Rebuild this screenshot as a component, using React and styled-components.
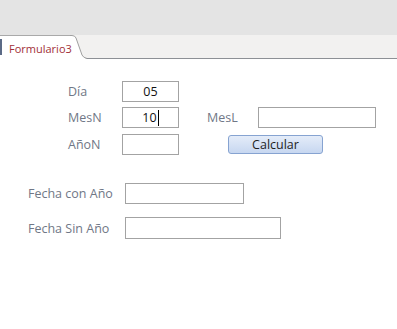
import React from "react";
import styled, { createGlobalStyle } from "styled-components";

const Global = createGlobalStyle`
  html, body { margin: 0; padding: 0; background: #ffffff; }
  body { width: 397px; height: 329px; overflow: hidden; font-family: "Open Sans", "Noto Sans", sans-serif; }
`;

const Page = styled.div`
  width: 397px;
  height: 329px;
  display: flex;
  flex-direction: column;
  background: #ffffff;
`;

const TopBar = styled.div`
  height: 35px;
  background: #e4e4e4;
  flex: none;
`;

const TabStrip = styled.div`
  height: 23px;
  background: #f2f1f0;
  border-bottom: 1px solid #8d9095;
  display: flex;
  align-items: stretch;
  flex: none;
`;

const Tab = styled.div`
  position: relative;
  width: 70px;
  height: 24px;
  background: #ffffff;
  border-top: 1px solid #a9a9a9;
  box-sizing: border-box;
  display: flex;
  align-items: center;
  padding-left: 9px;
  margin-bottom: -1px;
  white-space: nowrap;
`;

const TabEdge = styled.svg`
  position: absolute;
  left: 70px;
  top: -1px;
  width: 17px;
  height: 24px;
`;

const TabMarker = styled.span`
  position: absolute;
  left: 0;
  top: 3px;
  width: 2px;
  height: 16px;
  background: #5b6a86;
`;

const TabLabel = styled.span`
  position: relative;
  z-index: 1;
  font-size: 11px;
  font-weight: 500;
  color: #a22f37;
  line-height: 1;
  margin-top: 1px;
`;

const Body = styled.div`
  display: flex;
  flex-direction: column;
  padding-top: 22px;
`;

const Row = styled.div`
  display: flex;
  align-items: center;
  margin-left: ${(p) => p.$left}px;
  margin-top: ${(p) => p.$top || 0}px;
`;

const Label = styled.span`
  width: ${(p) => p.$w}px;
  margin-left: ${(p) => p.$ml || 0}px;
  font-size: 12.5px;
  color: #707786;
  flex: none;
`;

const Field = styled.div`
  width: ${(p) => p.$w}px;
  height: ${(p) => p.$h || 21}px;
  box-sizing: border-box;
  border: 1px solid #a3a3a3;
  background: #ffffff;
  display: flex;
  align-items: center;
  justify-content: center;
  font-size: 12.5px;
  color: #111111;
  flex: none;
`;

const Caret = styled.span`
  display: inline-block;
  width: 1px;
  height: 16px;
  background: #000000;
  margin-left: 1px;
`;

const Button = styled.div`
  width: 95px;
  height: 19px;
  margin-left: ${(p) => p.$ml}px;
  box-sizing: border-box;
  border: 1px solid #86a3d1;
  border-radius: 3px;
  background: linear-gradient(#e4ecf9, #c7d7f0);
  display: flex;
  align-items: center;
  justify-content: center;
  font-size: 12.5px;
  color: #1e1e1e;
  flex: none;
`;

export default function App() {
  return (
    <Page>
      <Global />
      <TopBar />
      <TabStrip>
        <Tab>
          <TabMarker />
          <TabLabel>Formulario3</TabLabel>
          <TabEdge viewBox="0 0 17 24">
            <path d="M0 0 L0 24 L17 24 L15 23 Q13 22 12 20 L6 3 Q5 0.5 2 0.5 L0 0.5 Z" fill="#ffffff" />
            <path d="M0 0.5 L2 0.5 Q5 0.5 6 3 L12 20 Q13 22.5 17 23.5" fill="none" stroke="#a0a0a0" strokeWidth="1" />
          </TabEdge>
        </Tab>
      </TabStrip>
      <Body>
        <Row $left={68}>
          <Label $w={54}>Día</Label>
          <Field $w={57}>05</Field>
        </Row>
        <Row $left={68} $top={5}>
          <Label $w={54}>MesN</Label>
          <Field $w={57}>
            10<Caret />
          </Field>
          <Label $w={51} $ml={28}>MesL</Label>
          <Field $w={118}></Field>
        </Row>
        <Row $left={68} $top={6}>
          <Label $w={54}>AñoN</Label>
          <Field $w={57}></Field>
          <Button $ml={49}>Calcular</Button>
        </Row>
        <Row $left={28} $top={28}>
          <Label $w={97}>Fecha con Año</Label>
          <Field $w={119}></Field>
        </Row>
        <Row $left={28} $top={13}>
          <Label $w={97}>Fecha Sin Año</Label>
          <Field $w={156} $h={22}></Field>
        </Row>
      </Body>
    </Page>
  );
}
